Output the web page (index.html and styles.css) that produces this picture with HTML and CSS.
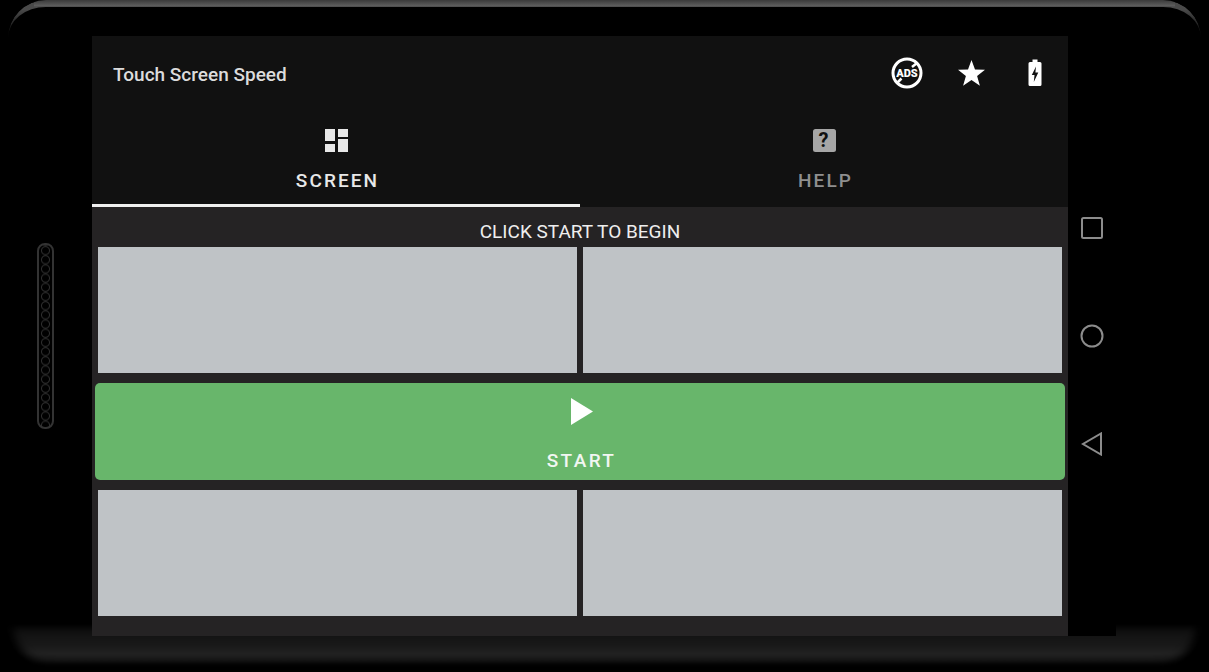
FILE: index.html
```html
<!DOCTYPE html>
<html lang="en">

<head>
    <meta charset="UTF-8">
    <meta name="viewport" content="width=device-width, initial-scale=1.0">
    <title>Touch Screen Speed</title>
    <link rel="stylesheet" href="styles.css">
</head>

<body>
    <!-- phone frame -->
    <div class="bezel-top"></div>
    <div class="bezel-bottom"></div>
    <div class="speaker"></div>

    <div class="device">
        <div class="screen">
            <header class="toolbar">
                <h1 class="app-title">Touch Screen Speed</h1>
                <div class="actions">
                    <svg class="action" viewBox="0 0 32 32">
                        <circle cx="16" cy="16" r="14" fill="none" stroke="#fff" stroke-width="3" />
                        <path d="M6 26 L10.500 21.500 M21 10 L26 6" stroke="#fff" stroke-width="2.500" />
                        <text x="16" y="19.500" class="ads-text">ADS</text>
                    </svg>
                    <svg class="action" viewBox="0 0 32 32">
                        <path d="M16.500 3 L20 12.400 L30 12.800 L22.100 19 L24.900 28.700 L16.500 23.100 L8.100 28.700 L10.900 19 L3 12.800 L13 12.400 Z" fill="#fff" />
                    </svg>
                    <svg class="action" viewBox="0 0 32 32">
                        <path fill-rule="evenodd" fill="#fff" d="M13.500 2.500 H18.500 V5 H21 A1.500 1.500 0 0 1 22.500 6.500 V27.500 A1.500 1.500 0 0 1 21 29 H11 A1.500 1.500 0 0 1 9.500 27.500 V6.500 A1.500 1.500 0 0 1 11 5 H13.500 Z M17 9.500 L12.800 18 H15.500 L14.800 25 L19.300 15.500 H16.400 Z" />
                    </svg>
                </div>
            </header>

            <nav class="tabs">
                <div class="tab active">
                    <svg class="tab-icon" viewBox="0 0 24 24">
                        <path d="M1 1 H11 V13 H1 Z M14 1 H24 V9 H14 Z M1 16 H11 V24 H1 Z M14 11 H24 V24 H14 Z" fill="currentColor" />
                    </svg>
                    <span>SCREEN</span>
                </div>
                <div class="tab">
                    <svg class="tab-icon" viewBox="0 0 24 24">
                        <rect x="1" y="1" width="23" height="23" rx="2.500" fill="currentColor" />
                        <text x="12.500" y="19" class="help-mark">?</text>
                    </svg>
                    <span>HELP</span>
                </div>
            </nav>

            <main class="test-area">
                <p class="hint">CLICK START TO BEGIN</p>
                <div class="panels">
                    <div class="panel"></div>
                    <div class="panel"></div>
                </div>
                <button class="start-btn">
                    <svg class="play" viewBox="0 0 24 28">
                        <path d="M1 0 L23 13.500 L1 27 Z" fill="#fff" />
                    </svg>
                    <span>START</span>
                </button>
                <div class="panels">
                    <div class="panel"></div>
                    <div class="panel"></div>
                </div>
            </main>
        </div>

        <aside class="sys-nav">
            <div class="sys-btn">
                <svg viewBox="0 0 24 24"><rect x="2" y="2" width="20" height="20" rx="1.500" /></svg>
            </div>
            <div class="sys-btn">
                <svg viewBox="0 0 24 24"><circle cx="12" cy="12" r="10.500" /></svg>
            </div>
            <div class="sys-btn">
                <svg viewBox="0 0 24 24"><path d="M21 1.500 V22.500 L3 12 Z" /></svg>
            </div>
        </aside>
    </div>
</body>

</html>
```

FILE: styles.css
```css
* {
    padding: 0;
    margin: 0;
    box-sizing: border-box;
}

html,
body {
    height: 100%;
    overflow: hidden;
}

body {
    background-color: #000;
    font-family: Roboto, "Liberation Sans", sans-serif;
    position: relative;
}

/* phone frame */
.bezel-top {
    position: absolute;
    top: 0;
    left: 8px;
    right: 8px;
    height: 38px;
    border-top: 7px solid #4a4a4a;
    border-radius: 42px 42px 0 0;
    -webkit-mask-image: linear-gradient(#000 25%, transparent 100%);
    mask-image: linear-gradient(#000 25%, transparent 100%);
}

.bezel-top::before {
    content: "";
    position: absolute;
    top: -7px;
    left: 26px;
    right: 26px;
    height: 7px;
    background: linear-gradient(#3a3a3a, #5c5c5c 80%, #4a4a4a);
}

.bezel-bottom {
    position: absolute;
    top: 625px;
    left: 8px;
    right: 8px;
    height: 41px;
    border-radius: 0 0 42px 42px;
    background: linear-gradient(#0f0f0f, #191919 50%, #222 70%, #181818 88%, #060606);
    box-shadow: inset 5px 0 8px #000, inset -5px 0 8px #000;
    filter: blur(1px);
}

.speaker {
    position: absolute;
    top: 243px;
    left: 37px;
    width: 17px;
    height: 186px;
    border: 2px solid #333;
    border-radius: 8px;
    background: radial-gradient(circle, transparent 3px, #2e2e2e 4px, transparent 5px) repeat-y 0 1px / 100% 9.200px;
    filter: blur(0.500px);
}

.device {
    position: relative;
    display: flex;
    align-items: flex-start;
    padding: 36px 0 0 92px;
}

.screen {
    width: 976px;
    height: 600px;
    background-color: #252324;
}

.toolbar {
    height: 76px;
    background-color: #111;
    display: flex;
    align-items: center;
    justify-content: space-between;
    padding: 0 17px 0 21px;
}

.app-title {
    font-size: 19px;
    font-weight: 500;
    color: #dcdcdc;
    margin-top: 1px;
}

.actions {
    display: flex;
    gap: 32px;
    margin-bottom: 3px;
}

.action {
    width: 32px;
    height: 32px;
}

.ads-text {
    font-family: Roboto, sans-serif;
    font-size: 11px;
    font-weight: 900;
    fill: #fff;
    text-anchor: middle;
}

.tabs {
    height: 95px;
    background-color: #111;
    display: grid;
    grid-template-columns: repeat(2, 1fr);
}

.tab {
    display: flex;
    flex-direction: column;
    align-items: center;
    padding-top: 16px;
    color: #8f8f8f;
    font-size: 19px;
    font-weight: 500;
    letter-spacing: 2.100px;
}

.tab span,
.start-btn span {
    margin-left: 3px;
}

.tab.active {
    color: #e8e8e8;
    border-bottom: 3px solid #f0f0f0;
}

.tab-icon {
    width: 24px;
    height: 24px;
    margin-bottom: 17px;
}

.tab:not(.active) .tab-icon {
    color: #a6a6a6;
}

.help-mark {
    font-family: Roboto, sans-serif;
    font-size: 20px;
    font-weight: 700;
    fill: #111;
    text-anchor: middle;
}

.hint {
    height: 40px;
    padding-top: 14px;
    line-height: 22px;
    text-align: center;
    font-size: 19px;
    color: #eee;
}

.panels {
    display: grid;
    grid-template-columns: repeat(2, 1fr);
    gap: 6px;
    height: 126px;
    padding: 0 6px;
}

.panel {
    background-color: #bfc3c6;
}

.start-btn {
    display: flex;
    flex-direction: column;
    align-items: center;
    width: 970px;
    height: 97px;
    margin: 10px 3px;
    padding-top: 15px;
    border: none;
    border-radius: 5px;
    background-color: #68b66b;
    color: #f2f6f2;
    font-family: inherit;
    font-size: 19px;
    font-weight: 500;
    letter-spacing: 2.400px;
}

.play {
    width: 24px;
    height: 28px;
    margin-bottom: 23px;
    margin-left: 4px;
}

.sys-nav {
    width: 48px;
    height: 600px;
    padding-top: 138px;
    background-color: #000;
}

.sys-btn {
    height: 108px;
    display: flex;
    align-items: center;
    justify-content: center;
}

.sys-btn svg {
    width: 24px;
    height: 24px;
    fill: none;
    stroke: #8c8c8c;
    stroke-width: 2;
}
```
